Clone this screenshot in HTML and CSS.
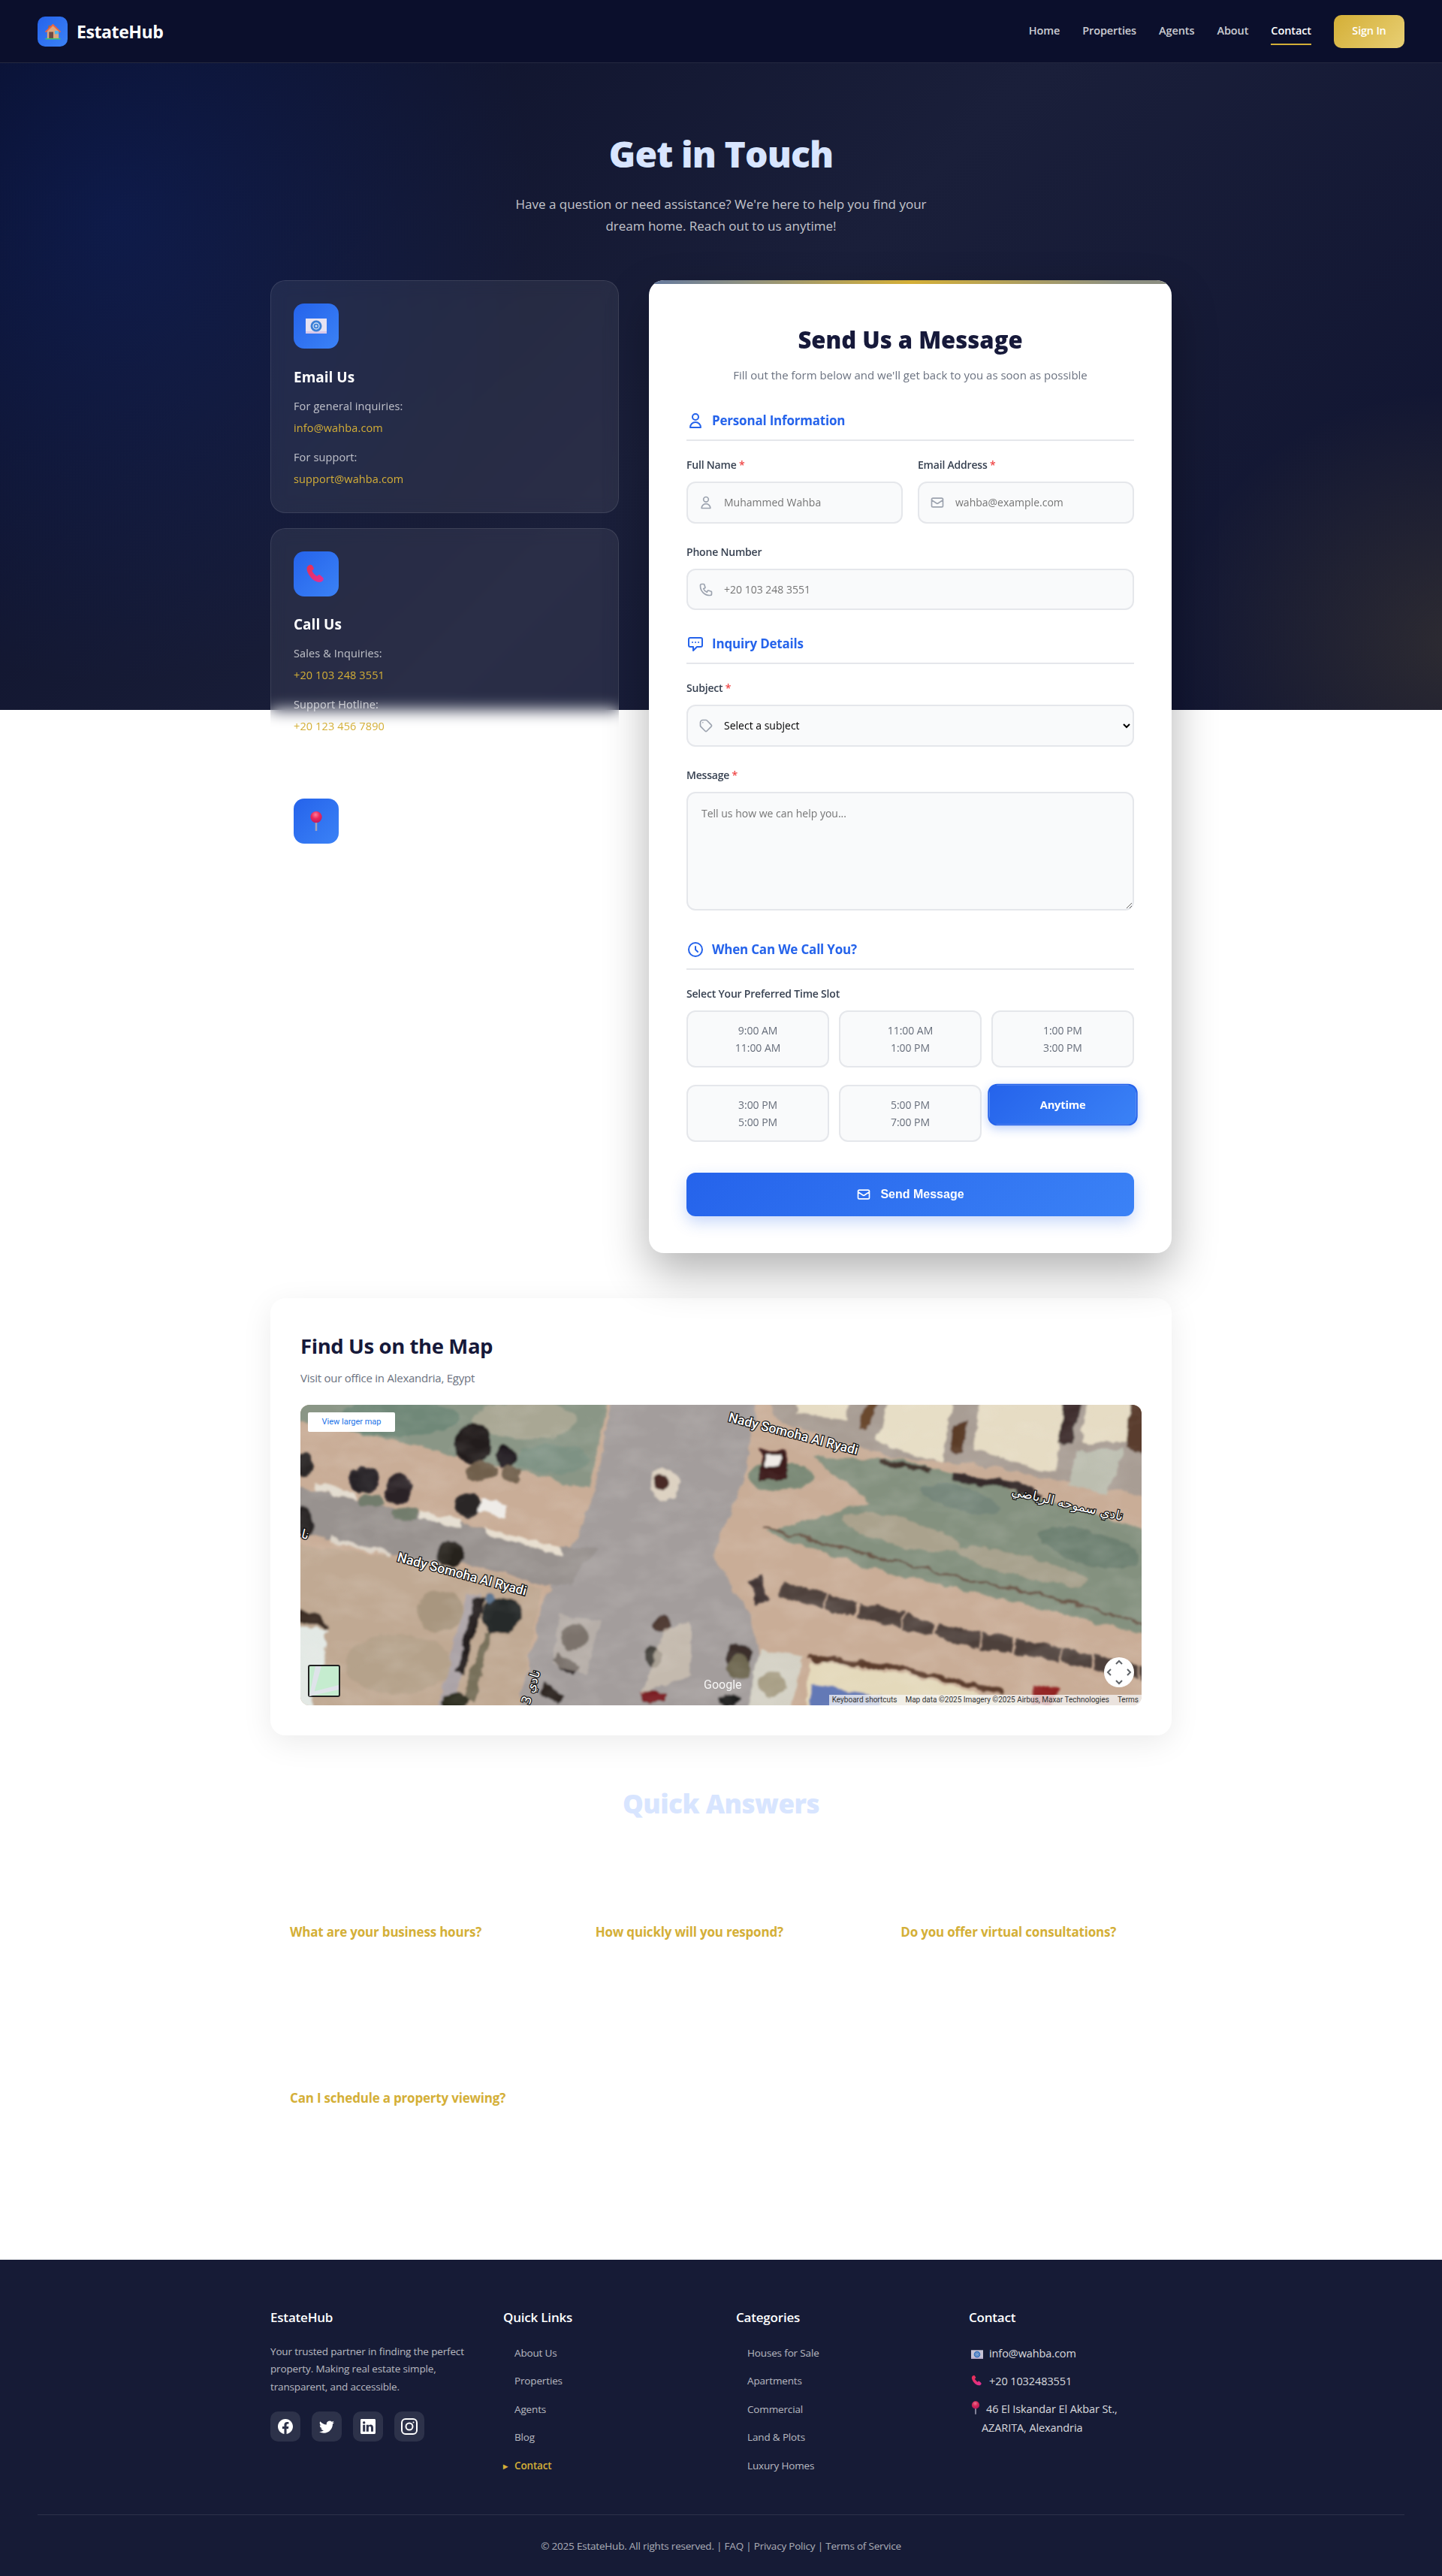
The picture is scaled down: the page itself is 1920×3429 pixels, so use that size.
FILE: index.html
```html
<!DOCTYPE html>
<html lang="en">
<head>
<meta charset="utf-8">
<title>Contact - EstateHub</title>
<link rel="stylesheet" href="styles.css">
</head>
<body>
<svg class="svg-defs" xmlns="http://www.w3.org/2000/svg">
  <defs>
    <linearGradient id="phoneGrad" x1="0" y1="0" x2="1" y2="1"><stop offset="0" stop-color="#e8304f"/><stop offset="1" stop-color="#e0309a"/></linearGradient>
    <radialGradient id="pinGrad" cx=".45" cy=".3" r=".7"><stop offset="0" stop-color="#ff7a9a"/><stop offset=".5" stop-color="#ea2a5c"/><stop offset="1" stop-color="#c21a5e"/></radialGradient>
    <filter id="rough" x="-5%" y="-5%" width="110%" height="110%">
      <feTurbulence type="fractalNoise" baseFrequency=".05" numOctaves="3" seed="4" result="n"/>
      <feDisplacementMap in="SourceGraphic" in2="n" scale="12" xChannelSelector="R" yChannelSelector="G"/>
      <feGaussianBlur stdDeviation="1.600"/>
    </filter>
    <filter id="mottle" x="0" y="0" width="100%" height="100%">
      <feTurbulence type="fractalNoise" baseFrequency=".02 .035" numOctaves="3" seed="9"/>
      <feColorMatrix type="matrix" values="0 0 0 0 .95  0 0 0 0 .92  0 0 0 0 .88  1.4 0 0 0 -.55"/>
    </filter>
    <symbol id="em-mail" viewBox="0 0 28 20">
      <rect width="28" height="20" fill="#e6e2f2"/>
      <rect y="17" width="28" height="3" fill="#d8c8ea"/>
      <circle cx="14" cy="10" r="7.500" fill="#3b7fd6"/>
      <circle cx="14" cy="10" r="4" fill="none" stroke="#cfe0f7" stroke-width="1.300"/>
      <circle cx="14" cy="10" r="1.600" fill="#cfe0f7"/>
    </symbol>
    <symbol id="em-phone" viewBox="0 0 28 28">
      <path d="M3 3.500c1.600-1.600 4.200-2.300 5.500-1 .8.8 1.800 2.600 2.400 4 .3.8-.2 1.500-1.200 2.100l-1.300.8c.9 2.600 3.800 5.900 6.800 7.500l1.200-1.100c.8-.7 1.600-1 2.300-.5 1.500.9 3.600 2.800 4.600 4 1.200 1.400.2 3.700-1.600 4.800-3.200 1.900-7.800.7-12.100-2.600C5.300 17.700 1 10.800 1.600 6.300c.1-1.100.7-2.100 1.400-2.800z" fill="url(#phoneGrad)"/>
    </symbol>
    <symbol id="em-pin" viewBox="0 0 20 30">
      <rect x="8.600" y="13" width="2.800" height="16.500" fill="#a5a3b8"/>
      <circle cx="10" cy="9" r="8.500" fill="url(#pinGrad)"/>
    </symbol>
    <symbol id="em-house" viewBox="0 0 24 23">
      <rect x="5.500" y="3" width="3" height="6" fill="#a0674a"/>
      <path d="M4 10 12 3l8 7v11H4z" fill="#dca67e"/>
      <path d="M1 11.500 12 .8l11 10.700-1.300 1.300L12 3.600 2.300 12.800z" fill="#f0633c"/>
      <rect x="6.500" y="12" width="6" height="9" fill="#6e4a44"/>
      <rect x="14.500" y="10.500" width="5" height="4.500" fill="#4fb5ef"/>
      <rect x="1.500" y="20.800" width="21" height="1.600" fill="#3fc76a"/>
    </symbol>
    <symbol id="i-user" viewBox="0 0 24 24"><path d="M16 7a4 4 0 11-8 0 4 4 0 018 0zM12 14a7 7 0 00-7 7h14a7 7 0 00-7-7z"/></symbol>
    <symbol id="i-mail" viewBox="0 0 24 24"><path d="M3 8l7.890 5.260a2 2 0 002.220 0L21 8M5 19h14a2 2 0 002-2V7a2 2 0 00-2-2H5a2 2 0 00-2 2v10a2 2 0 002 2z"/></symbol>
    <symbol id="i-phone" viewBox="0 0 24 24"><path d="M3 5a2 2 0 012-2h3.280a1 1 0 01.948.684l1.498 4.493a1 1 0 01-.502 1.210l-2.257 1.130a11.042 11.042 0 005.516 5.516l1.130-2.257a1 1 0 011.210-.502l4.493 1.498a1 1 0 01.684.949V19a2 2 0 01-2 2h-1C9.716 21 3 14.284 3 6V5z"/></symbol>
    <symbol id="i-tag" viewBox="0 0 24 24"><path d="M7 7h.01M7 3h5c.512 0 1.024.195 1.414.586l7 7a2 2 0 010 2.828l-7 7a2 2 0 01-2.828 0l-7-7A1.994 1.994 0 013 12V7a4 4 0 014-4z"/></symbol>
    <symbol id="i-chat" viewBox="0 0 24 24"><path d="M8 10h.01M12 10h.01M16 10h.01M9 16H5a2 2 0 01-2-2V6a2 2 0 012-2h14a2 2 0 012 2v8a2 2 0 01-2 2h-5l-5 5v-5z"/></symbol>
    <symbol id="i-clock" viewBox="0 0 24 24"><path d="M12 8v4l3 3m6-3a9 9 0 11-18 0 9 9 0 0118 0z"/></symbol>
  </defs>
</svg>

<nav class="nav">
  <a class="brand" href="#"><span class="brand-icon"><svg class="brand-house"><use href="#em-house"/></svg></span><span class="brand-name">EstateHub</span></a>
  <div class="nav-right">
    <a class="nav-link" href="#">Home</a>
    <a class="nav-link" href="#">Properties</a>
    <a class="nav-link" href="#">Agents</a>
    <a class="nav-link" href="#">About</a>
    <a class="nav-link active" href="#">Contact</a>
    <a class="signin" href="#">Sign In</a>
  </div>
</nav>

<main class="page">
  <header class="hero-head">
    <h1 class="hero-title">Get in Touch</h1>
    <p class="hero-sub">Have a question or need assistance? We're here to help you find your<br>dream home. Reach out to us anytime!</p>
  </header>

  <div class="contact-grid">
    <aside class="info-col">
      <section class="info-card">
        <div class="info-icon"><svg class="em-mail"><use href="#em-mail"/></svg></div>
        <h3 class="info-title">Email Us</h3>
        <p class="info-text">For general inquiries:</p>
        <a class="info-link" href="#">info@wahba.com</a>
        <p class="info-text">For support:</p>
        <a class="info-link" href="#">support@wahba.com</a>
      </section>
      <section class="info-card">
        <div class="info-icon"><svg class="em-phone"><use href="#em-phone"/></svg></div>
        <h3 class="info-title">Call Us</h3>
        <p class="info-text">Sales &amp; Inquiries:</p>
        <a class="info-link" href="#">+20 103 248 3551</a>
        <p class="info-text">Support Hotline:</p>
        <a class="info-link" href="#">+20 123 456 7890</a>
      </section>
      <section class="info-card">
        <div class="info-icon"><svg class="em-pin"><use href="#em-pin"/></svg></div>
        <h3 class="info-title">Visit Us</h3>
        <p class="info-text">46 El Iskandar El Akbar St.,</p>
        <p class="info-text">AZARITA, Alexandria</p>
      </section>
    </aside>

    <form class="form-card">
      <h2 class="form-title">Send Us a Message</h2>
      <p class="form-sub">Fill out the form below and we'll get back to you as soon as possible</p>

      <h4 class="section-head"><svg class="section-icon"><use href="#i-user"/></svg>Personal Information</h4>
      <div class="row-2">
        <div class="field">
          <label class="label">Full Name <span class="req">*</span></label>
          <div class="input-wrap"><svg class="input-icon"><use href="#i-user"/></svg><input class="input" type="text" placeholder="Muhammed Wahba"></div>
        </div>
        <div class="field">
          <label class="label">Email Address <span class="req">*</span></label>
          <div class="input-wrap"><svg class="input-icon"><use href="#i-mail"/></svg><input class="input" type="email" placeholder="wahba@example.com"></div>
        </div>
      </div>
      <div class="field field-next">
        <label class="label">Phone Number</label>
        <div class="input-wrap"><svg class="input-icon"><use href="#i-phone"/></svg><input class="input" type="tel" placeholder="+20 103 248 3551"></div>
      </div>

      <h4 class="section-head section-next"><svg class="section-icon"><use href="#i-chat"/></svg>Inquiry Details</h4>
      <div class="field">
        <label class="label">Subject <span class="req">*</span></label>
        <div class="input-wrap"><svg class="input-icon"><use href="#i-tag"/></svg>
          <select class="input select"><option>Select a subject</option></select></div>
      </div>
      <div class="field field-next">
        <label class="label">Message <span class="req">*</span></label>
        <textarea class="textarea" placeholder="Tell us how we can help you..."></textarea>
      </div>

      <h4 class="section-head section-when"><svg class="section-icon"><use href="#i-clock"/></svg>When Can We Call You?</h4>
      <div class="field">
        <label class="label">Select Your Preferred Time Slot</label>
        <div class="slots">
          <div class="slot">9:00 AM<br>11:00 AM</div>
          <div class="slot">11:00 AM<br>1:00 PM</div>
          <div class="slot">1:00 PM<br>3:00 PM</div>
          <div class="slot">3:00 PM<br>5:00 PM</div>
          <div class="slot">5:00 PM<br>7:00 PM</div>
          <div class="slot selected">Anytime</div>
        </div>
      </div>
      <button class="send" type="button"><svg class="send-icon"><use href="#i-mail"/></svg>Send Message</button>
    </form>
  </div>

  <section class="map-card">
    <h2 class="map-title">Find Us on the Map</h2>
    <p class="map-sub">Visit our office in Alexandria, Egypt</p>
    <div class="map">
      <svg class="map-art" viewBox="0 0 1120 400" preserveAspectRatio="none" xmlns="http://www.w3.org/2000/svg">
        <rect width="1120" height="400" fill="#c9ad97"/>
        <g filter="url(#rough)">
          <polygon points="-20,-20 412,-20 385,112 250,78 100,42 -20,20" fill="#8a9686"/>
          <ellipse cx="130" cy="18" rx="80" ry="24" fill="#6f8878"/>
          <ellipse cx="300" cy="20" rx="70" ry="25" fill="#a9a794"/>
          <ellipse cx="335" cy="72" rx="50" ry="20" fill="#7e9284"/>
          <polygon points="415,-20 610,-20 590,100 548,200 600,280 625,420 286,420 321,267 357,200 393,117" fill="#a39d9c"/>
          <polygon points="-20,105 211,157 343,190 395,190 360,240 321,240 243,217 125,200 43,180 -20,170" fill="#98928f"/>
          <polygon points="20,103 70,116 74,126 22,114" fill="#e4ddd0"/>
          <polygon points="160,140 212,155 212,165 160,150" fill="#e6dfd2"/>
          <polygon points="243,162 345,190 348,202 245,172" fill="#e8dfd0"/>
          <polygon points="40,176 120,198 120,203 40,182" fill="#ddd4c8"/>
          <polygon points="-20,182 250,222 321,245 286,420 -20,420" fill="#c0a993"/>
          <polygon points="222,250 240,252 200,420 178,420" fill="#aaa2a6"/>
          <polygon points="232,255 246,258 218,360 206,358" fill="#241f1d"/>
          <polygon points="246,300 255,300 232,395 215,395" fill="#77705a"/>
          <polygon points="-20,292 38,300 12,420 -20,420" fill="#e3e9e5"/>
          <polygon points="-20,268 30,280 38,298 -20,285" fill="#3c2d28"/>
          <ellipse cx="130" cy="345" rx="70" ry="40" fill="#b5a28b"/>
          <ellipse cx="185" cy="275" rx="30" ry="28" fill="#a8967f"/>
          <polygon points="610,-20 1140,-20 1140,125 905,80 790,70 640,25" fill="#a89d94"/>
          <polygon points="767,50 788,-20 868,-20 855,77" fill="#e7dec6"/>
          <polygon points="895,60 908,-20 1022,-20 1005,90" fill="#e6dcc4"/>
          <polygon points="660,-20 735,-20 725,20 660,12" fill="#e6dcc4"/>
          <polygon points="1040,50 1050,-20 1110,-20 1100,50" fill="#e6dcc4"/>
          <polygon points="1032,60 1095,60 1075,118 1020,108" fill="#bcbeb0"/>
          <polygon points="1105,-20 1140,-20 1140,70 1100,55" fill="#5a3e2e"/>
          <polygon points="868,30 888,22 880,65 864,60" fill="#5a3b28"/>
          <polygon points="1018,-20 1045,-20 1026,55 1008,52" fill="#3a2b2a"/>
          <polygon points="760,-20 776,-20 755,32 744,30" fill="#6b4a2e"/>
          <polygon points="680,70 800,72 950,115 1140,170 1140,310 950,262 760,218 620,170 760,130" fill="#84917f"/>
          <ellipse cx="800" cy="170" rx="80" ry="18" fill="#aaa28d" transform="rotate(14 800 170)"/>
          <ellipse cx="960" cy="215" rx="90" ry="14" fill="#a8a28e" transform="rotate(14 960 215)"/>
          <ellipse cx="640" cy="95" rx="45" ry="18" fill="#7a8976"/>
          <ellipse cx="880" cy="125" rx="55" ry="15" fill="#75867a" transform="rotate(14 880 125)"/>
          <ellipse cx="1050" cy="190" rx="70" ry="22" fill="#6d8071" transform="rotate(14 1050 190)"/>
          <polyline points="615,163 720,190 880,230 1010,258 1140,297" fill="none" stroke="#6a5546" stroke-width="3"/>
          <polyline points="775,76 840,88" fill="none" stroke="#3f302c" stroke-width="8"/>
          <polyline points="870,97 950,108 985,125" fill="none" stroke="#352a2a" stroke-width="11"/>
          <polyline points="640,245 720,268 880,308 1000,330 1140,362" fill="none" stroke="#4e3f3a" stroke-width="20" stroke-dasharray="60 3 40 4"/>
          <polyline points="605,232 615,262" fill="none" stroke="#3b2e2e" stroke-width="16"/>
          <polygon points="678,340 800,358 1060,420 670,420" fill="#e4d9bb"/>
          <polyline points="674,335 800,352 935,382" fill="none" stroke="#5a3a2a" stroke-width="6"/>
          <polygon points="682,372 775,388 760,420 674,420" fill="#6379b6"/>
          <polygon points="612,325 668,335 652,420 592,420" fill="#d4d1c5"/>
          <circle cx="628" cy="372" r="17" fill="#a89f86"/>
          <ellipse cx="583" cy="335" rx="17" ry="17" fill="#3a2f2a"/>
          <ellipse cx="585" cy="350" rx="16" ry="16" fill="#6d6650"/>
          <polygon points="975,372 1010,378 1000,400 975,400" fill="#8f1d1d"/>
          <circle cx="485" cy="105" r="21" fill="#ddd2c2"/>
          <circle cx="480" cy="103" r="11" fill="#4a2a25"/>
          <ellipse cx="230" cy="52" rx="25" ry="26" fill="#211a1d"/>
          <ellipse cx="273" cy="70" rx="13" ry="15" fill="#1f191b"/>
          <ellipse cx="240" cy="88" rx="22" ry="13" fill="#705e4c"/>
          <ellipse cx="282" cy="92" rx="13" ry="11" fill="#705e4c"/>
          <ellipse cx="84" cy="100" rx="19" ry="18" fill="#262028"/>
          <ellipse cx="130" cy="112" rx="18" ry="19" fill="#2b2428"/>
          <ellipse cx="222" cy="135" rx="18" ry="17" fill="#2c2628"/>
          <ellipse cx="200" cy="198" rx="18" ry="17" fill="#25201f"/>
          <ellipse cx="5" cy="155" rx="14" ry="20" fill="#2a2626"/>
          <ellipse cx="3" cy="80" rx="13" ry="16" fill="#2c2828"/>
          <ellipse cx="95" cy="128" rx="18" ry="8" fill="#727b6c"/>
          <ellipse cx="140" cy="145" rx="18" ry="9" fill="#727b6c"/>
          <ellipse cx="268" cy="280" rx="27" ry="25" fill="#27292c"/>
          <ellipse cx="252" cy="258" rx="7" ry="9" fill="#5c7590"/>
          <rect x="238" y="128" width="36" height="18" fill="#efece8" transform="rotate(15 255 137)"/>
          <rect x="612" y="60" width="34" height="40" fill="#3d1a1e"/>
          <rect x="618" y="66" width="20" height="16" fill="#efeae6"/>
          <ellipse cx="365" cy="308" rx="17" ry="20" fill="#2f2725"/>
          <ellipse cx="482" cy="292" rx="12" ry="12" fill="#46302a"/>
          <ellipse cx="470" cy="335" rx="11" ry="15" fill="#43403a"/>
          <rect x="335" y="335" width="34" height="15" fill="#2a2424" transform="rotate(35 350 345)"/>
          <rect x="320" y="378" width="32" height="14" fill="#2f2524" transform="rotate(35 335 385)"/>
          <rect x="455" y="382" width="32" height="14" fill="#7a1f24"/>
          <polygon points="345,280 400,290 380,360 335,345" fill="#c9bfb3" opacity=".5"/>
          <polygon points="485,300 520,290 520,360 455,385" fill="#d6cab9" opacity=".65"/>
          <ellipse cx="205" cy="395" rx="18" ry="10" fill="#2b2a1e"/>
          <ellipse cx="570" cy="392" rx="16" ry="8" fill="#1f1b1b"/>
        </g>
        <rect width="1120" height="400" filter="url(#mottle)" opacity=".18"/>
        <g class="map-label">
          <text transform="translate(128 208) rotate(15)">Nady Somoha Al Ryadi</text>
          <text transform="translate(569 22) rotate(14.500)">Nady Somoha Al Ryadi</text>
          <text class="map-ar" transform="translate(946 120) rotate(13)">نادي سموحه الرياضي</text>
          <text class="map-ar" transform="translate(-20 172) rotate(14)">نادي</text>
          <text class="map-ar" transform="translate(305 400) rotate(-72)">نادي 3</text>
        </g>
        <text class="map-google" x="537" y="378">Google</text>
        <rect x="11" y="347" width="41" height="41" rx="2" fill="#c5eccf" stroke="#222" stroke-width="2"/>
        <polygon points="12,383 51,373 51,379 12,388" fill="#dfe3ea"/>
        <polygon points="20,348 28,348 17,387 12,387" fill="#dfe3ea"/>
        <circle cx="1090" cy="356" r="20" fill="#fff"/>
        <path d="M1086 345l4-4 4 4M1086 367l4 4 4-4M1079 352l-4 4 4 4M1101 352l4 4-4 4" fill="none" stroke="#5f6368" stroke-width="2"/>
      </svg>
      <a class="map-larger" href="#">View larger map</a>
      <div class="map-attr"><span>Keyboard shortcuts</span><span>Map data ©2025 Imagery ©2025 Airbus, Maxar Technologies</span><span>Terms</span></div>
    </div>
  </section>

  <section class="faq">
    <h2 class="faq-title">Quick Answers</h2>
    <div class="faq-grid">
      <div class="faq-item"><h4 class="faq-q">What are your business hours?</h4></div>
      <div class="faq-item"><h4 class="faq-q">How quickly will you respond?</h4></div>
      <div class="faq-item"><h4 class="faq-q">Do you offer virtual consultations?</h4></div>
      <div class="faq-item"><h4 class="faq-q">Can I schedule a property viewing?</h4></div>
    </div>
  </section>
</main>

<footer class="footer">
  <div class="footer-grid">
    <div>
      <h4 class="foot-title">EstateHub</h4>
      <p class="foot-about">Your trusted partner in finding the perfect property. Making real estate simple, transparent, and accessible.</p>
      <div class="socials">
        <a class="social" href="#"><svg viewBox="0 0 16 16"><path d="M16 8.049c0-4.446-3.582-8.050-8-8.050C3.580 0-.002 3.603-.002 8.050c0 4.017 2.926 7.347 6.750 7.951v-5.625h-2.030V8.050H6.750V6.275c0-2.017 1.195-3.131 3.022-3.131.876 0 1.791.157 1.791.157v1.980h-1.009c-.993 0-1.303.621-1.303 1.258v1.510h2.218l-.354 2.326H9.250V16c3.824-.604 6.750-3.934 6.750-7.951z"/></svg></a>
        <a class="social" href="#"><svg viewBox="0 0 16 16"><path d="M5.026 15c6.038 0 9.341-5.003 9.341-9.334 0-.14 0-.282-.006-.422A6.685 6.685 0 0 0 16 3.542a6.658 6.658 0 0 1-1.889.518 3.301 3.301 0 0 0 1.447-1.817 6.533 6.533 0 0 1-2.087.793A3.286 3.286 0 0 0 7.875 6.030a9.325 9.325 0 0 1-6.767-3.429 3.289 3.289 0 0 0 1.018 4.382A3.323 3.323 0 0 1 .64 6.575v.045a3.288 3.288 0 0 0 2.632 3.218 3.203 3.203 0 0 1-.865.115 3.230 3.230 0 0 1-.614-.057 3.283 3.283 0 0 0 3.067 2.277A6.588 6.588 0 0 1 .78 13.580a6.320 6.320 0 0 1-.78-.045A9.344 9.344 0 0 0 5.026 15z"/></svg></a>
        <a class="social" href="#"><svg viewBox="0 0 16 16"><path d="M0 1.146C0 .513.526 0 1.175 0h13.650C15.474 0 16 .513 16 1.146v13.708c0 .633-.526 1.146-1.175 1.146H1.175C.526 16 0 15.487 0 14.854V1.146zm4.943 12.248V6.169H2.542v7.225h2.401zm-1.200-8.212c.837 0 1.358-.554 1.358-1.248-.015-.709-.520-1.248-1.342-1.248-.822 0-1.359.540-1.359 1.248 0 .694.521 1.248 1.327 1.248h.016zm4.908 8.212V9.359c0-.216.016-.432.080-.586.173-.431.568-.878 1.232-.878.869 0 1.216.662 1.216 1.634v3.865h2.401V9.250c0-2.220-1.184-3.252-2.764-3.252-1.274 0-1.845.7-2.165 1.193v.025h-.016a5.540 5.540 0 0 1 .016-.025V6.169h-2.400c.030.678 0 7.225 0 7.225h2.400z"/></svg></a>
        <a class="social" href="#"><svg viewBox="0 0 24 24" class="insta"><rect x="2" y="2" width="20" height="20" rx="5"/><circle cx="12" cy="12" r="4.500"/><circle class="insta-dot" cx="17.500" cy="6.500" r="1"/></svg></a>
      </div>
    </div>
    <div>
      <h4 class="foot-title">Quick Links</h4>
      <ul class="foot-links">
        <li><a href="#">About Us</a></li>
        <li><a href="#">Properties</a></li>
        <li><a href="#">Agents</a></li>
        <li><a href="#">Blog</a></li>
        <li class="current"><a href="#">Contact</a></li>
      </ul>
    </div>
    <div>
      <h4 class="foot-title">Categories</h4>
      <ul class="foot-links">
        <li><a href="#">Houses for Sale</a></li>
        <li><a href="#">Apartments</a></li>
        <li><a href="#">Commercial</a></li>
        <li><a href="#">Land &amp; Plots</a></li>
        <li><a href="#">Luxury Homes</a></li>
      </ul>
    </div>
    <div>
      <h4 class="foot-title">Contact</h4>
      <ul class="foot-contact">
        <li><svg class="fc-mail"><use href="#em-mail"/></svg>info@wahba.com</li>
        <li><svg class="fc-phone"><use href="#em-phone"/></svg>+20 1032483551</li>
        <li><svg class="fc-pin"><use href="#em-pin"/></svg>46 El Iskandar El Akbar St.,<br>AZARITA, Alexandria</li>
      </ul>
    </div>
  </div>
  <div class="copyright">© 2025 EstateHub. All rights reserved. | FAQ | Privacy Policy | Terms of Service</div>
</footer>
</body>
</html>
```
FILE: styles.css
```css
* { box-sizing: border-box; }
html, body { margin: 0; padding: 0; }
body { font-family: "Open Sans", "Liberation Sans", sans-serif; background: #fff; color: #16193a; line-height: 1.7; }
h1, h2, h3, h4, p, ul { margin: 0; padding: 0; }
a { text-decoration: none; color: inherit; }
ul { list-style: none; }
.svg-defs { display: block; width: 0; height: 0; overflow: hidden; }

/* nav */
.nav { height: 84px; padding: 0 50px; display: flex; align-items: center; justify-content: space-between; background: #0b0f2c; border-bottom: 1px solid #24283f; }
.brand { display: flex; align-items: center; gap: 12px; }
.brand-icon { width: 40px; height: 40px; border-radius: 10px; background: linear-gradient(135deg, #2563eb, #3b82f6); display: flex; align-items: center; justify-content: center; }
.brand-house { width: 23px; height: 22px; }
.brand-name { color: #fff; font-size: 23px; font-weight: 700; letter-spacing: -.4px; line-height: 36px; }
.nav-right { display: flex; align-items: center; gap: 30px; }
.nav-link { color: rgba(255,255,255,.8); font-size: 14.500px; font-weight: 600; letter-spacing: -.1px; line-height: 24px; padding: 6px 0 5px; border-bottom: 2px solid transparent; }
.nav-link.active { color: #fff; border-bottom-color: #d4af37; }
.signin { width: 94px; height: 44px; border-radius: 10px; background: linear-gradient(135deg, #d4af37, #e8cf74); color: #fff; font-size: 14.500px; font-weight: 600; letter-spacing: -.2px; display: flex; align-items: center; justify-content: center; }

/* hero + grid */
.page {
  background-repeat: no-repeat;
  background-size: 100% 861px;
  background-image:
    radial-gradient(ellipse 560px 620px at 8% 24%, rgba(15,60,190,.2), rgba(15,60,190,0)),
    radial-gradient(ellipse 380px 340px at 101% 90%, rgba(212,175,55,.15), rgba(212,175,55,0)),
    linear-gradient(135deg, #0a0e27 0%, #1a1f3a 50%, #0f1330 100%);
}
.hero-head { padding-top: 91px; text-align: center; margin-bottom: 58px; }
.hero-title { font-size: 48px; line-height: 60px; font-weight: 800; color: #d8e5ff; letter-spacing: -.9px; }
.hero-sub { margin-top: 22px; font-size: 17px; line-height: 29px; color: rgba(255,255,255,.75); }

.contact-grid { width: 1200px; margin: 0 auto; display: grid; grid-template-columns: 464px 696px; column-gap: 40px; align-items: start; }
.info-col { display: flex; flex-direction: column; gap: 20px; }
.info-card { height: 309.500px; padding: 30px; border: 1px solid rgba(255,255,255,.1); border-radius: 20px; background: rgba(255,255,255,.07); -webkit-backdrop-filter: blur(10px); backdrop-filter: blur(10px); }
.info-icon { width: 60px; height: 60px; border-radius: 14px; background: linear-gradient(135deg, #2563eb, #3b82f6); display: flex; align-items: center; justify-content: center; }
.em-mail { width: 28px; height: 20px; }
.em-phone { width: 28px; height: 28px; }
.em-pin { width: 18px; height: 28px; }
.info-title { margin: 20.500px 0 9px; font-size: 19px; line-height: 34px; font-weight: 700; color: #fff; }
.info-text { font-size: 14.500px; line-height: 25.500px; color: rgba(255,255,255,.7); margin-top: 13.500px; letter-spacing: .12px; }
.info-title + .info-text { margin-top: 0; }
.info-link { display: block; margin-top: 3.500px; font-size: 14.500px; line-height: 25.500px; color: #d4af37; letter-spacing: .12px; }

/* form */
.form-card { position: relative; background: #fff; border-radius: 20px; padding: 50px; height: 1295px; overflow: hidden; box-shadow: 0 25px 60px rgba(0,0,0,.3); }
.form-card::before { content: ""; position: absolute; top: 0; left: 0; right: 0; height: 5px; background: linear-gradient(90deg, #64799f 0%, #8d9082 18%, #d4af37 50%, #8d9082 90%, #8b8d80 100%); }
.form-title { font-size: 31px; line-height: 58px; font-weight: 800; text-align: center; color: #16193a; }
.form-sub { margin: 6px 0 35px; font-size: 15px; line-height: 24px; text-align: center; color: #6b7280; }
.section-head { height: 41px; border-bottom: 2px solid #e5e7eb; display: flex; align-items: flex-start; gap: 10px; font-size: 17px; line-height: 28px; font-weight: 700; color: #2563eb; letter-spacing: -.2px; }
.section-icon { width: 24px; height: 24px; margin-top: 2px; fill: none; stroke: #2563eb; stroke-width: 2; stroke-linecap: round; stroke-linejoin: round; flex: none; }
.section-next { margin-top: 31px; }
.section-when { margin-top: 37.500px; }
.row-2 { display: grid; grid-template-columns: 1fr 1fr; gap: 20px; }
.field { padding-top: 21px; }
.field-next { padding-top: 27px; }
.label { display: block; font-size: 14px; line-height: 22px; font-weight: 600; color: #374151; letter-spacing: -.2px; margin-bottom: 11px; }
.req { color: #ef4444; }
.input-wrap { position: relative; }
.input-icon { position: absolute; left: 16px; top: 18px; width: 20px; height: 20px; fill: none; stroke: #9ca3af; stroke-width: 2; stroke-linecap: round; stroke-linejoin: round; }
.input { display: block; width: 100%; height: 55.500px; padding: 0 16px 0 48px; border: 2px solid #e5e7eb; border-radius: 12px; background: #f9fafb; font-family: inherit; font-size: 14px; color: #111827; outline: none; }
.input::placeholder, .textarea::placeholder { color: #757575; opacity: 1; }
.select { color: #000; padding-left: 44px; }
.textarea { display: block; width: 100%; height: 158.500px; padding: 16px 18px; border: 2px solid #e5e7eb; border-radius: 12px; background: #f9fafb; font-family: inherit; font-size: 14px; line-height: 22px; outline: none; }
.slots { display: grid; grid-template-columns: repeat(3, 1fr); gap: 23px 12.800px; align-items: start; }
.slot { padding: 13px 8px; border: 2px solid #e5e7eb; border-radius: 12px; background: #f9fafb; text-align: center; font-size: 14px; line-height: 23px; color: #666d7a; letter-spacing: -.05px; }
.slot.selected { background: linear-gradient(135deg, #2563eb, #3b82f6); border-color: #2563eb; color: #fff; font-weight: 700; transform: scale(1.05); box-shadow: 0 4px 12px rgba(37,99,235,.3); letter-spacing: -.2px; }
.send { width: 100%; height: 58px; margin-top: 41.500px; border: 0; border-radius: 12px; background: linear-gradient(135deg, #2563eb, #3b82f6); color: #fff; font-family: "Liberation Sans", Arial, sans-serif; font-size: 16px; font-weight: 700; display: flex; align-items: center; justify-content: center; gap: 12px; box-shadow: 0 8px 20px rgba(37,99,235,.25); }
.send-icon { width: 20px; height: 20px; fill: none; stroke: #fff; stroke-width: 2; stroke-linecap: round; stroke-linejoin: round; }

/* map */
.map-card { width: 1200px; margin: 60px auto 0; padding: 40px; background: #fff; border-radius: 20px; box-shadow: 0 10px 40px rgba(0,0,0,.08); }
.map-title { font-size: 27.500px; line-height: 48px; font-weight: 700; color: #16193a; letter-spacing: -.4px; }
.map-sub { margin: 5.500px 0 23.500px; font-size: 15px; line-height: 25px; color: #6b7280; letter-spacing: -.25px; }
.map { position: relative; height: 400px; border-radius: 12px; overflow: hidden; }
.map-art { display: block; width: 100%; height: 100%; }
.map-label text { font-family: Roboto, "Noto Sans", "DejaVu Sans", sans-serif; font-size: 17.500px; font-weight: 500; fill: #fff; stroke: #111; stroke-width: 2.500px; paint-order: stroke; }
.map-label .map-ar { font-family: "DejaVu Sans", sans-serif; font-size: 17px; font-weight: 400; }
.map-google { font-family: Roboto, sans-serif; font-size: 16px; fill: #fff; opacity: .9; }
.map-larger { position: absolute; left: 10px; top: 10px; width: 116px; height: 26px; background: #fff; border-radius: 2px; font-family: Roboto, sans-serif; font-size: 11px; line-height: 26px; text-align: center; color: #1a73e8; }
.map-attr { position: absolute; right: 0; bottom: 0; height: 14px; padding: 0 4px; background: rgba(245,245,245,.75); display: flex; gap: 11px; font-family: Roboto, sans-serif; font-size: 10px; line-height: 14px; color: #333; }

/* faq */
.faq { width: 1200px; margin: 0 auto; padding-top: 56.500px; padding-bottom: 101px; }
.faq-title { font-size: 35px; line-height: 68px; font-weight: 800; text-align: center; color: #d8e5ff; letter-spacing: -.5px; }
.faq-grid { margin-top: 60px; display: grid; grid-template-columns: repeat(3, 1fr); gap: 30px 20px; }
.faq-item { height: 191px; padding: 64px 26px 0; }
.faq-q { font-size: 17px; line-height: 26px; font-weight: 700; color: #d4af37; letter-spacing: -.2px; }

/* footer */
.footer { background: #161b36; padding: 64px 50px 29px; color: #fff; }
.footer-grid { width: 1200px; height: 275px; margin: 0 auto; display: grid; grid-template-columns: repeat(4, 270px); column-gap: 40px; }
.foot-title { font-size: 17px; line-height: 26px; font-weight: 600; color: #fff; letter-spacing: -.2px; }
.foot-about { margin-top: 21px; font-size: 13.500px; line-height: 23.800px; color: rgba(255,255,255,.7); letter-spacing: -.15px; }
.socials { margin-top: 20px; display: flex; gap: 15px; }
.social { width: 40px; height: 40px; border-radius: 10px; background: rgba(255,255,255,.1); display: flex; align-items: center; justify-content: center; }
.social svg { width: 20px; height: 20px; fill: #fff; }
.social .insta { width: 24px; height: 24px; fill: none; stroke: #fff; stroke-width: 2; }
.insta-dot { fill: #fff; stroke: none; }
.foot-links { margin-top: 23.400px; display: flex; flex-direction: column; gap: 13.700px; }
.foot-links li { position: relative; padding-left: 15px; font-size: 13.500px; line-height: 23.800px; color: rgba(255,255,255,.7); letter-spacing: -.15px; }
.foot-links li.current { color: #d4af37; font-weight: 600; }
.foot-links li.current::before { content: "▸"; position: absolute; left: 0; top: 0; font-size: 12px; }
.foot-contact { margin-top: 22.300px; display: flex; flex-direction: column; gap: 11.500px; padding-left: 3px; font-size: 14.500px; line-height: 25.500px; color: rgba(255,255,255,.85); letter-spacing: -.1px; }
.foot-contact li { padding-left: 14px; text-indent: -14px; }
.foot-contact svg { display: inline-block; vertical-align: -2px; margin-right: 8px; }
.fc-mail { width: 16px; height: 12px; opacity: .85; }
.fc-phone { width: 16px; height: 16px; }
.fc-pin { width: 12px; height: 18px; margin-right: 9px; vertical-align: -3px; opacity: .9; }
.copyright { border-top: 1px solid rgba(255,255,255,.1); padding-top: 29px; font-size: 13.500px; line-height: 24px; text-align: center; color: rgba(255,255,255,.65); letter-spacing: -.2px; }
```
